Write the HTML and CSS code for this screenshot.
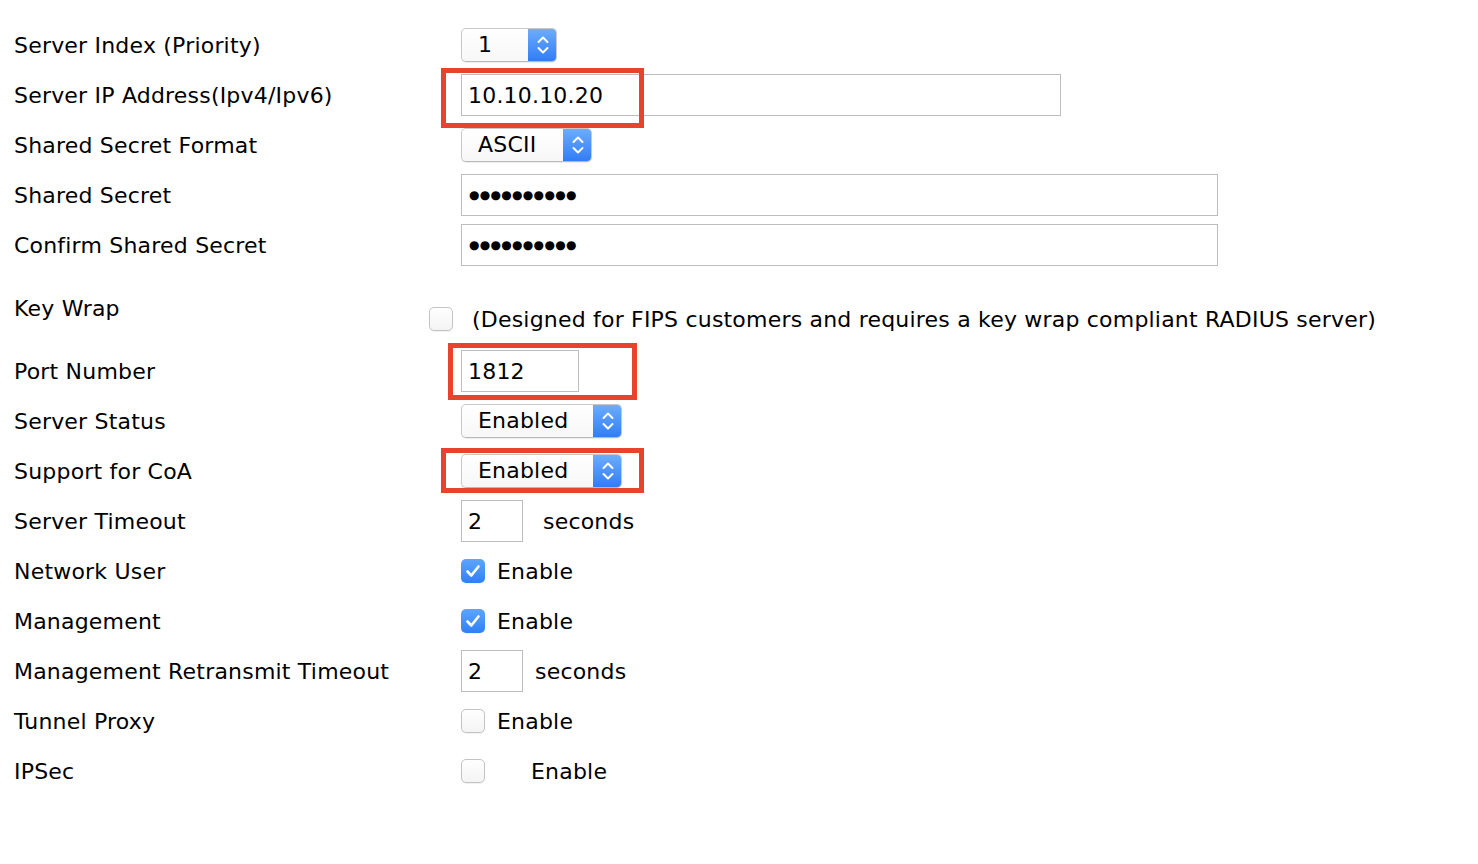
FILE: index.html
```html
<!DOCTYPE html>
<html lang="en">
<head>
<meta charset="utf-8">
<title>RADIUS Authentication Server</title>
<link rel="stylesheet" href="styles.css">
</head>
<body>
<div class="form">
  <div class="row">
    <div class="label">Server Index (Priority)</div>
    <div class="ctl">
      <div class="select w-idx"><span class="sel-text">1</span><span class="stepper"><svg width="14" height="20" viewBox="0 0 14 20"><path d="M2.5 7 L7 2.5 L11.5 7 M2.5 13 L7 17.5 L11.5 13" fill="none" stroke="#fff" stroke-width="2" stroke-linecap="round" stroke-linejoin="round"/></svg></span></div>
    </div>
  </div>
  <div class="row">
    <div class="label">Server IP Address(Ipv4/Ipv6)</div>
    <div class="ctl">
      <input class="field w-ip" type="text" value="10.10.10.20" readonly>
      <span class="hl hl-ip"></span>
    </div>
  </div>
  <div class="row">
    <div class="label">Shared Secret Format</div>
    <div class="ctl">
      <div class="select w-fmt"><span class="sel-text">ASCII</span><span class="stepper"><svg width="14" height="20" viewBox="0 0 14 20"><path d="M2.5 7 L7 2.5 L11.5 7 M2.5 13 L7 17.5 L11.5 13" fill="none" stroke="#fff" stroke-width="2" stroke-linecap="round" stroke-linejoin="round"/></svg></span></div>
    </div>
  </div>
  <div class="row">
    <div class="label">Shared Secret</div>
    <div class="ctl">
      <div class="field w-secret secret">●●●●●●●●●●</div>
    </div>
  </div>
  <div class="row">
    <div class="label">Confirm Shared Secret</div>
    <div class="ctl">
      <div class="field w-secret secret">●●●●●●●●●●</div>
    </div>
  </div>
  <div class="row row-tall">
    <div class="label">Key Wrap</div>
    <div class="ctl ctl-keywrap">
      <span class="cb"></span>
      <span class="kw-text">(Designed for FIPS customers and requires a key wrap compliant RADIUS server)</span>
    </div>
  </div>
  <div class="row">
    <div class="label">Port Number</div>
    <div class="ctl">
      <input class="field w-port" type="text" value="1812" readonly>
      <span class="hl hl-port"></span>
    </div>
  </div>
  <div class="row">
    <div class="label">Server Status</div>
    <div class="ctl">
      <div class="select w-en"><span class="sel-text">Enabled</span><span class="stepper"><svg width="14" height="20" viewBox="0 0 14 20"><path d="M2.5 7 L7 2.5 L11.5 7 M2.5 13 L7 17.5 L11.5 13" fill="none" stroke="#fff" stroke-width="2" stroke-linecap="round" stroke-linejoin="round"/></svg></span></div>
    </div>
  </div>
  <div class="row">
    <div class="label">Support for CoA</div>
    <div class="ctl">
      <div class="select w-en"><span class="sel-text">Enabled</span><span class="stepper"><svg width="14" height="20" viewBox="0 0 14 20"><path d="M2.5 7 L7 2.5 L11.5 7 M2.5 13 L7 17.5 L11.5 13" fill="none" stroke="#fff" stroke-width="2" stroke-linecap="round" stroke-linejoin="round"/></svg></span></div>
      <span class="hl hl-coa"></span>
    </div>
  </div>
  <div class="row">
    <div class="label">Server Timeout</div>
    <div class="ctl">
      <input class="field w-num" type="text" value="2" readonly>
      <span class="unit gap-20">seconds</span>
    </div>
  </div>
  <div class="row">
    <div class="label">Network User</div>
    <div class="ctl">
      <span class="cb cb-on"><svg width="24" height="24" viewBox="0 0 24 24"><path d="M6.5 12.5 L10.3 16.5 L17.5 7.5" fill="none" stroke="#fff" stroke-width="2.6" stroke-linecap="round" stroke-linejoin="round"/></svg></span>
      <span class="unit gap-12">Enable</span>
    </div>
  </div>
  <div class="row">
    <div class="label">Management</div>
    <div class="ctl">
      <span class="cb cb-on"><svg width="24" height="24" viewBox="0 0 24 24"><path d="M6.5 12.5 L10.3 16.5 L17.5 7.5" fill="none" stroke="#fff" stroke-width="2.6" stroke-linecap="round" stroke-linejoin="round"/></svg></span>
      <span class="unit gap-12">Enable</span>
    </div>
  </div>
  <div class="row">
    <div class="label">Management Retransmit Timeout</div>
    <div class="ctl">
      <input class="field w-num" type="text" value="2" readonly>
      <span class="unit gap-12">seconds</span>
    </div>
  </div>
  <div class="row">
    <div class="label">Tunnel Proxy</div>
    <div class="ctl">
      <span class="cb"></span>
      <span class="unit gap-12">Enable</span>
    </div>
  </div>
  <div class="row">
    <div class="label">IPSec</div>
    <div class="ctl">
      <span class="cb"></span>
      <span class="unit gap-46">Enable</span>
    </div>
  </div>
</div>
</body>
</html>
```

FILE: styles.css
```css
* { box-sizing: border-box; }

html, body {
  background: #ffffff;
}

body {
  margin: 0;
  padding: 20px 0 0 14px;
  font-family: "DejaVu Sans", Verdana, sans-serif;
  font-size: 22px;
  letter-spacing: 0.2px;
  color: #000;
}

.row {
  display: flex;
  align-items: center;
  height: 50px;
}

.row-tall {
  height: 76px;
}

.label {
  flex: none;
  width: 447px;
  white-space: nowrap;
}

.ctl {
  position: relative;
  display: flex;
  align-items: center;
}

.ctl-keywrap {
  margin-left: -32px;
  padding-top: 22px;
}

.kw-text {
  margin-left: 19px;
  white-space: nowrap;
}

/* selects */
.select {
  display: flex;
  align-items: stretch;
  height: 34px;
  border: 1px solid #c9c9c9;
  border-bottom-color: #b9b9b9;
  border-radius: 5px;
  background: linear-gradient(#ffffff, #f7f7f7);
  box-shadow: 0 1px 1px rgba(0, 0, 0, 0.08);
  overflow: hidden;
}

.sel-text {
  flex: 1;
  display: flex;
  align-items: center;
  padding-left: 16px;
  line-height: 1;
}

.stepper {
  flex: none;
  width: 29px;
  display: flex;
  align-items: center;
  justify-content: center;
  background: linear-gradient(#6eaefc, #2f7bf6);
  margin: -1px -1px -1px 0;
}

.w-idx { width: 96px; }
.w-fmt { width: 131px; }
.w-en  { width: 161px; }

/* text inputs */
.field {
  display: flex;
  align-items: center;
  height: 42px;
  margin: 0;
  padding: 0 0 0 6px;
  border: 1px solid #bdbdbd;
  border-radius: 0;
  background: #fff;
  font-family: "DejaVu Sans", Verdana, sans-serif;
  font-size: 22px;
  letter-spacing: 0.2px;
  color: #000;
  outline: none;
}

.w-ip { width: 600px; }
.w-secret { width: 757px; }
.w-port { width: 118px; }
.w-num { width: 62px; }

.secret {
  font-size: 12px;
  letter-spacing: 0.3px;
  padding-left: 7px;
}

/* highlight boxes */
.hl {
  position: absolute;
  border: 5px solid #e8432c;
  pointer-events: none;
}

.hl-ip   { left: -20px; top: -6px;  width: 203px; height: 60px; }
.hl-port { left: -13px; top: -7px;  width: 189px; height: 57px; }
.hl-coa  { left: -20px; top: -6px;  width: 203px; height: 45px; }

/* checkboxes */
.cb {
  flex: none;
  display: inline-flex;
  width: 24px;
  height: 24px;
  border: 1px solid #c3c3c3;
  border-radius: 5px;
  background: linear-gradient(#ffffff, #f4f4f4);
  box-shadow: 0 1px 1px rgba(0, 0, 0, 0.06);
}

.cb-on {
  border: none;
  background: linear-gradient(#5ea5fc, #2f80f6);
}

.cb-on svg { display: block; }

.unit { white-space: nowrap; }
.gap-12 { margin-left: 12px; }
.gap-20 { margin-left: 20px; }
.gap-46 { margin-left: 46px; }
```
